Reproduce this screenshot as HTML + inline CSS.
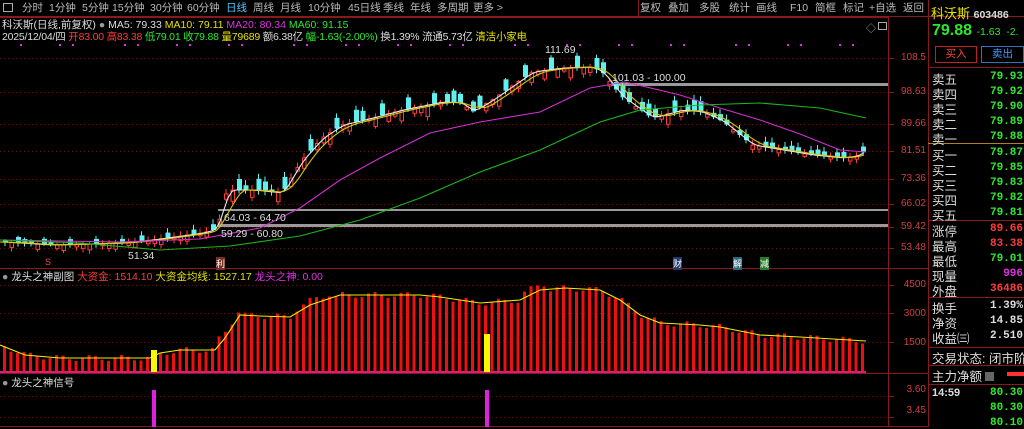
<!DOCTYPE html>
<html><head><meta charset="utf-8"><style>
*{margin:0;padding:0;box-sizing:border-box}
body{width:1024px;height:427px;background:#000;overflow:hidden;position:relative;font-family:"Liberation Sans","Noto Sans CJK SC",sans-serif;font-size:11px;color:#ccc}
.a{position:absolute;white-space:nowrap}
.tab{top:0;height:17px;line-height:16px;font-size:10.5px;color:#bbb}
.r{color:#ff3b3b}.g{color:#2ee82e}.y{color:#e8e000}.m{color:#e030e0}.w{color:#ddd}
.lbl{font-size:12.5px;color:#ddd;left:932px}
.val{font-size:11px;right:1px;font-weight:bold;font-family:"Liberation Mono",monospace}
.ax{font-size:10px;color:#d04040;right:98px;text-align:right}
.hl{position:absolute;height:1px;background:#8a1a1a}
</style></head><body>
<svg id="s" width="1024" height="427" style="position:absolute;left:0;top:0"></svg>

<div class="a tab" style="left:0;width:1024px;border-bottom:1px solid #8a1a1a;height:17px"></div>
<div class="a" style="left:3px;top:3px;width:10px;height:9px;border:1px solid #aaa"></div>
<div class="a tab" style="left:22px">分时</div>
<div class="a tab" style="left:49px">1分钟</div>
<div class="a tab" style="left:82px">5分钟</div>
<div class="a tab" style="left:112px">15分钟</div>
<div class="a tab" style="left:150px">30分钟</div>
<div class="a tab" style="left:187px">60分钟</div>
<div class="a tab" style="left:226px;color:#4cc8ff">日线</div>
<div class="a tab" style="left:253px">周线</div>
<div class="a tab" style="left:280px">月线</div>
<div class="a tab" style="left:308px">10分钟</div>
<div class="a tab" style="left:348px">45日线</div>
<div class="a tab" style="left:383px">季线</div>
<div class="a tab" style="left:410px">年线</div>
<div class="a tab" style="left:437px">多周期</div>
<div class="a tab" style="left:473px">更多 &gt;</div>
<div class="a tab" style="left:640px">复权</div><div class="a tab" style="left:668px">叠加</div><div class="a tab" style="left:699px">多股</div><div class="a tab" style="left:729px">统计</div><div class="a tab" style="left:756px">画线</div><div class="a tab" style="left:790px">F10</div><div class="a tab" style="left:815px">简框</div><div class="a tab" style="left:843px">标记</div><div class="a tab" style="left:869px">+自选</div><div class="a tab" style="left:903px">返回</div>
<div class="a" style="left:638px;top:0;width:1px;height:17px;background:#8a1a1a"></div>

<div class="a" style="left:2px;top:17px;font-size:10.5px"><span class="w">科沃斯(日线,前复权)</span> <span style="color:#999">●</span> <span class="w">MA5: 79.33</span> <span class="y">MA10: 79.11</span> <span class="m">MA20: 80.34</span> <span class="g">MA60: 91.15</span></div>
<div class="a" style="left:2px;top:29px;font-size:10.5px;letter-spacing:-0.2px"><span class="w">2025/12/04/四</span> <span class="r">开83.00 高83.38</span> <span class="g">低79.01 收79.88</span> <span class="y">量79689</span> <span class="w">额6.38亿</span> <span class="g">幅-1.63(-2.00%)</span> <span class="w">换1.39% 流通5.73亿</span> <span class="y">清洁小家电</span></div>

<div class="a w" style="left:545px;top:44px;font-size:10.5px">111.69</div>
<div class="a w" style="left:612px;top:72px;font-size:10.5px">101.03 - 100.00</div>
<div class="a w" style="left:224px;top:212px;font-size:10.5px">64.03 - 64.70</div>
<div class="a w" style="left:221px;top:228px;font-size:10.5px">59.29 - 60.80</div>
<div class="a w" style="left:128px;top:250px;font-size:10.5px">51.34</div>
<div class="a" style="left:216px;top:257px;font-size:9px;background:#7a3020;color:#fff">利</div>
<div class="a" style="left:673px;top:257px;font-size:9px;background:#203a70;color:#fff">财</div>
<div class="a" style="left:733px;top:257px;font-size:9px;background:#2a6a7a;color:#fff">解</div>
<div class="a" style="left:760px;top:257px;font-size:9px;background:#2a7a2a;color:#fff">减</div>
<div class="a r" style="left:45px;top:257px;font-size:9px">S</div>

<div class="a" style="left:2px;top:269px;font-size:10.5px"><span style="color:#999">●</span> <span class="w">龙头之神副图</span> <span class="r">大资金: 1514.10</span> <span class="y">大资金均线: 1527.17</span> <span class="m">龙头之神: 0.00</span></div>
<div class="a" style="left:2px;top:375px;font-size:10.5px"><span style="color:#999">●</span> <span class="w">龙头之神信号</span></div>

<div class="a ax" style="top:52px">108.5</div>
<div class="a ax" style="top:86px">98.63</div>
<div class="a ax" style="top:118px">89.66</div>
<div class="a ax" style="top:145px">81.51</div>
<div class="a ax" style="top:173px">73.36</div>
<div class="a ax" style="top:198px">66.02</div>
<div class="a ax" style="top:221px">59.42</div>
<div class="a ax" style="top:242px">53.48</div>
<div class="a ax" style="top:279px">4500</div>
<div class="a ax" style="top:308px">3000</div>
<div class="a ax" style="top:337px">1500</div>
<div class="a ax" style="top:384px">3.60</div>
<div class="a ax" style="top:405px">3.45</div>
<div class="a" style="left:866px;top:20px;font-size:10px;color:#aaa">◇</div>
<div class="a" style="left:878px;top:22px;width:9px;height:8px;border:1px solid #aaa"></div>

<div class="a" style="left:931px;top:3px;font-size:13px;color:#e8e000">科沃斯 <span style="font-size:10.5px;color:#ddd;font-weight:bold">603486</span></div>
<div class="a" style="left:932px;top:22px;font-size:16px;font-weight:bold;color:#2ee82e">79.88 <span style="font-size:10.5px;font-weight:normal">-1.63&nbsp; -2.</span></div>
<div class="a" style="left:935px;top:46px;width:42px;height:17px;border:1px solid #c02020;color:#ff4040;text-align:center;line-height:15px;font-size:10.5px">买入</div>
<div class="a" style="left:981px;top:46px;width:43px;height:17px;border:1px solid #3070c0;color:#4a9aff;text-align:center;line-height:15px;font-size:10.5px">卖出</div>
<div class="hl" style="left:928px;top:67px;width:96px"></div>
<div class="hl" style="left:928px;top:143px;width:96px;background:#b08020"></div>
<div class="hl" style="left:928px;top:220px;width:96px"></div>
<div class="hl" style="left:928px;top:297px;width:96px"></div>
<div class="hl" style="left:928px;top:347px;width:96px"></div>
<div class="hl" style="left:928px;top:365px;width:96px"></div>
<div class="hl" style="left:928px;top:384px;width:96px"></div>

<div class="a lbl" style="top:69px">卖五</div><div class="a val g" style="top:71px">79.93</div>
<div class="a lbl" style="top:84px">卖四</div><div class="a val g" style="top:86px">79.92</div>
<div class="a lbl" style="top:99px">卖三</div><div class="a val g" style="top:101px">79.90</div>
<div class="a lbl" style="top:114px">卖二</div><div class="a val g" style="top:116px">79.89</div>
<div class="a lbl" style="top:129px">卖一</div><div class="a val g" style="top:131px">79.88</div>
<div class="a lbl" style="top:145px">买一</div><div class="a val g" style="top:147px">79.87</div>
<div class="a lbl" style="top:160px">买二</div><div class="a val g" style="top:162px">79.85</div>
<div class="a lbl" style="top:175px">买三</div><div class="a val g" style="top:177px">79.83</div>
<div class="a lbl" style="top:190px">买四</div><div class="a val g" style="top:192px">79.82</div>
<div class="a lbl" style="top:205px">买五</div><div class="a val g" style="top:207px">79.81</div>
<div class="a lbl" style="top:221px">涨停</div><div class="a val r" style="top:223px">89.66</div>
<div class="a lbl" style="top:236px">最高</div><div class="a val r" style="top:238px">83.38</div>
<div class="a lbl" style="top:251px">最低</div><div class="a val g" style="top:253px">79.01</div>
<div class="a lbl" style="top:266px">现量</div><div class="a val m" style="top:268px">996</div>
<div class="a lbl" style="top:281px">外盘</div><div class="a val r" style="top:283px">36486</div>
<div class="a lbl" style="top:298px">换手</div><div class="a val w" style="top:300px">1.39%</div>
<div class="a lbl" style="top:313px">净资</div><div class="a val w" style="top:315px">14.85</div>
<div class="a lbl" style="top:328px">收益㈢</div><div class="a val w" style="top:330px">2.510</div>
<div class="a lbl" style="top:348px">交易状态: 闭市阶</div>
<div class="a lbl" style="top:366px">主力净额 <span style="display:inline-block;width:9px;height:9px;background:#666"></span></div>
<div class="a" style="left:1007px;top:372px;width:17px;height:4px;background:#ff3030"></div>
<div class="a w" style="left:932px;top:387px;font-size:11px;font-weight:bold">14:59</div>
<div class="a val g" style="top:387px">80.30</div>
<div class="a val g" style="top:402px">80.30</div>
<div class="a val g" style="top:417px">80.10</div>

<script>
const s=document.getElementById('s');let h='';
const L=(x1,y1,x2,y2,c,w,d)=>h+=`<line x1="${x1}" y1="${y1}" x2="${x2}" y2="${y2}" stroke="${c}" stroke-width="${w||1}"${d?` stroke-dasharray="${d}"`:''}/>`;
const R=(x,y,w,hh,f,st)=>h+=`<rect x="${x}" y="${y}" width="${w}" height="${hh}" fill="${f}"${st?` stroke="${st}"`:''}/>`;
function interp(pts,x){for(let i=0;i<pts.length-1;i++){if(x<=pts[i+1][0]){const[a,b]=pts[i],[c,d]=pts[i+1];return b+(d-b)*(x-a)/(c-a)}}return pts[pts.length-1][1]}
L(0,17.5,888,17.5,'#8a1a1a');L(888.5,17,888.5,427,'#8a1a1a');L(928.5,0,928.5,427,'#8a1a1a');
L(0,268.5,928,268.5,'#8a1a1a');L(0,373.5,928,373.5,'#8a1a1a');L(0,426.5,928,426.5,'#8a1a1a');
[58,92,124,151,179,204,227,248].forEach(y=>{L(0,y+.5,888,y+.5,'#6a1010',1,'1 3');L(888,y+.5,894,y+.5,'#8a1a1a')});
[285,313,342,396,417].forEach(y=>{L(0,y+.5,888,y+.5,'#6a1010',1,'1 3');L(888,y+.5,894,y+.5,'#8a1a1a')});
for(let x=20;x<880;x+=13){if(Math.sin(x*0.37)>0.1)R(x,44,2,2,'#e030e0')}
R(218,209,670,2,'#9a9a9a');R(218,224,670,3,'#9a9a9a');R(608,83,280,3,'#9a9a9a');
const cp=[[0,242],[50,245],[120,243],[150,240],[200,233],[215,229],[225,190],[250,190],[280,193],[300,160],[320,138],[340,125],[370,118],[400,110],[420,106],[440,102],[460,103],[470,112],[490,100],[530,72],[560,68],[590,67],[600,72],[620,97],[650,118],[680,110],[700,112],[720,121],[750,145],[780,150],[810,155],[840,158],[855,156],[866,149]];
const ma=(pts,k)=>{let o=[];for(let x=0;x<=866;x+=4){let s=0,n=0;for(let j=0;j<k;j++){let xx=Math.max(0,x-j*4);s+=interp(pts,xx);n++}o.push([x,s/n])}return o};
const pl=(o,c)=>h+=`<polyline fill="none" stroke="${c}" stroke-width="1.1" points="${o.map(p=>p.join(',')).join(' ')}"/>`;
for(let i=0;i<133;i++){const x=3+i*6.5;const c=interp(cp,x);const up=Math.sin(i*1.7)+ (interp(cp,x-6)>c?0.6:-0.6)>0;
const body=2+Math.abs(Math.sin(i*2.3))*(x>220&&x<700?10:4);const o=up?c+body:c-body;
const t=Math.min(o,c)-1-Math.abs(Math.sin(i*3.1))*4,b=Math.max(o,c)+1+Math.abs(Math.cos(i*2.9))*3;
const col=up?'#ff3b3b':'#5ff0f0';L(x+2,t,x+2,b,col);
if(up)R(x+0.5,Math.min(o,c),3.5,Math.abs(o-c),'#000',col);else R(x,Math.min(o,c),5,Math.max(1,Math.abs(o-c)),col);}
pl(ma(cp,3),'#e8e8e8');pl(ma(cp,6),'#d8c800');
pl([[0,240],[120,242],[200,239],[260,228],[300,208],[340,180],[380,158],[430,133],[480,122],[540,112],[590,88],[625,82],[680,95],[720,108],[760,120],[800,134],[840,150],[866,152]],'#d030d0');
pl([[0,240],[80,243],[160,250],[230,246],[300,236],[360,220],[420,198],[480,172],[540,150],[600,122],[640,110],[700,105],[760,103],[820,108],[866,118]],'#18b818');
const yl=[[0,345],[25,355],[60,358],[150,358],[160,353],[180,350],[215,350],[225,338],[240,315],[260,316],[290,317],[310,305],[340,295],[420,295],[440,297],[480,303],[520,300],[540,290],[565,288],[600,290],[620,300],[640,315],[660,323],[700,325],[720,327],[760,335],[800,337],[866,341]];
for(let i=0;i<133;i++){const x=3+i*6.5;let t=interp(yl,x)+Math.sin(i*1.3)*3;if(x>215&&x<240)t-=8;if(x>290&&x<330)t-=5;if(x>520&&x<545)t-=6;R(x,t,3,372-t,'#ee1010');}
pl(yl,'#f0f000');
R(0,371,866,2,'#d02080');
R(151,350,6,22,'#f8f800');R(484,334,6,38,'#f8f800');
R(152,390,4,37,'#e020e0');R(485,390,4,37,'#e020e0');
s.innerHTML=h;
</script>
</body></html>
